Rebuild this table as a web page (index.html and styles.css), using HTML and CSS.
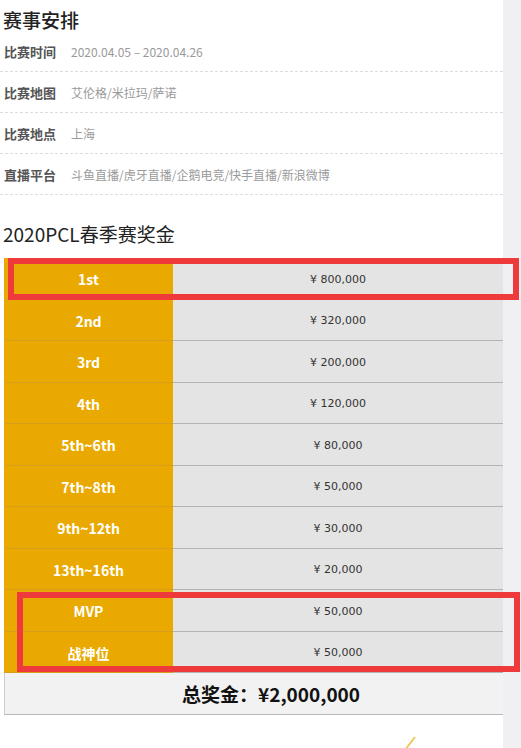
FILE: index.html
```html
<!DOCTYPE html>
<html lang="zh-CN">
<head>
    <meta charset="UTF-8">
    <meta name="viewport" content="width=device-width, initial-scale=1.0">
    <title>2020PCL春季赛</title>
    <link rel="stylesheet" href="styles.css">
</head>
<body>
    <div class="page">
        <div class="main">
            <h2 class="title">赛事安排</h2>
            <ul class="info">
                <li><span class="label">比赛时间</span><span class="val">2020.04.05 – 2020.04.26</span></li>
                <li><span class="label">比赛地图</span><span class="val">艾伦格/米拉玛/萨诺</span></li>
                <li><span class="label">比赛地点</span><span class="val">上海</span></li>
                <li><span class="label">直播平台</span><span class="val">斗鱼直播/虎牙直播/企鹅电竞/快手直播/新浪微博</span></li>
            </ul>

            <h2 class="title title2">2020PCL春季赛奖金</h2>
            <div class="prize">
                <div class="row"><div class="rank">1st</div><div class="money">¥ 800,000</div></div>
                <div class="row"><div class="rank">2nd</div><div class="money">¥ 320,000</div></div>
                <div class="row"><div class="rank">3rd</div><div class="money">¥ 200,000</div></div>
                <div class="row"><div class="rank">4th</div><div class="money">¥ 120,000</div></div>
                <div class="row"><div class="rank">5th~6th</div><div class="money">¥ 80,000</div></div>
                <div class="row"><div class="rank">7th~8th</div><div class="money">¥ 50,000</div></div>
                <div class="row"><div class="rank">9th~12th</div><div class="money">¥ 30,000</div></div>
                <div class="row"><div class="rank">13th~16th</div><div class="money">¥ 20,000</div></div>
                <div class="row"><div class="rank">MVP</div><div class="money">¥ 50,000</div></div>
                <div class="row"><div class="rank">战神位</div><div class="money">¥ 50,000</div></div>
                <div class="total">总奖金：¥2,000,000</div>

                <!-- 红框标注 -->
                <div class="mark mark1"></div>
                <div class="mark mark2"></div>
            </div>

            <div class="more">
                <svg width="14" height="16" viewBox="0 0 14 16"><path d="M2 15 L12 2" stroke="#f0c860" stroke-width="2" fill="none"/></svg>
            </div>
        </div>
        <div class="side"></div>
    </div>
</body>
</html>
```

FILE: styles.css
```css
* {
    padding: 0;
    margin: 0;
}

body {
    font-family: "Noto Sans CJK SC", "Noto Sans", sans-serif;
    background: #fff;
    color: #333;
}

.page {
    display: flex;
    width: 521px;
    height: 748px;
    overflow: hidden;
}

.main {
    width: 503px;
    flex-shrink: 0;
}

.side {
    flex: 1;
    background: #f0f0f2;
}

.title {
    font-size: 19px;
    font-weight: 500;
    color: #222;
    line-height: 22px;
    padding: 9px 0 0 3px;
}

.title2 {
    font-weight: 400;
    padding-top: 25px;
    line-height: 28px;
    margin-bottom: 10px;
}

.info {
    list-style: none;
}

.info li {
    height: 40px;
    display: flex;
    align-items: center;
    padding-left: 4px;
    border-bottom: 1px dashed #dcdcdc;
}

.label {
    font-size: 13px;
    font-weight: 700;
    color: #555;
    width: 67px;
}

.val {
    font-size: 12px;
    color: #9a9a9a;
}

.prize {
    position: relative;
    margin-left: 4px;
}

.row {
    display: flex;
    height: 41.5px;
}

.rank {
    width: 169px;
    background: #e9a900;
    color: #fff;
    font-weight: 700;
    font-size: 14px;
    display: flex;
    align-items: center;
    justify-content: center;
    padding-top: 2px;
    border-bottom: 1px solid #d79f1c;
}

.money {
    flex: 1;
    background: #e4e4e4;
    color: #333;
    font-family: "DejaVu Sans", sans-serif;
    font-size: 11px;
    display: flex;
    align-items: center;
    justify-content: center;
    padding-top: 2px;
    border-bottom: 1px solid #b4b4b4;
}

.row:last-of-type .rank,
.row:last-of-type .money {
    border-bottom: none;
}

.total {
    height: 41px;
    background: #f2f2f2;
    border-left: 1px solid #cfcfcf;
    border-bottom: 1px solid #b8b8b8;
    font-size: 19px;
    font-weight: 700;
    color: #111;
    display: flex;
    align-items: center;
    justify-content: center;
    padding-left: 34px;
}

.mark {
    position: absolute;
    border: 6px solid #ef3a3c;
}

.mark1 {
    left: 4px;
    top: 0;
    width: 499px;
    height: 30px;
}

.mark2 {
    left: 13px;
    top: 334px;
    width: 491px;
    height: 68px;
}

.more {
    padding: 17px 0 0 403px;
}
```
